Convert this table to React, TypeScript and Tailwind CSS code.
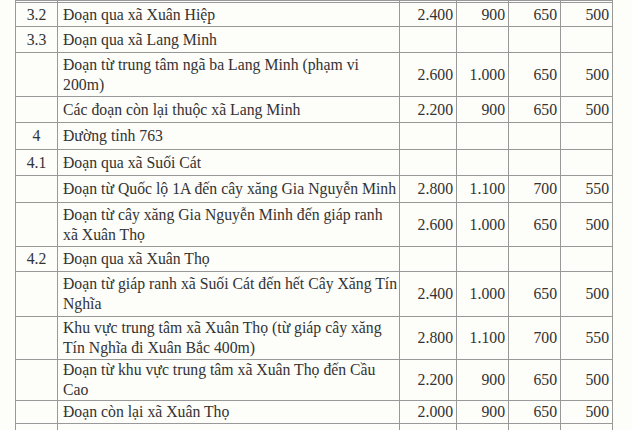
const rows = [
  { stt: "", name: [""], prices: ["", "", "", ""], h: "h-[2px]" },
  { stt: "3.2", name: ["Đoạn qua xã Xuân Hiệp"], prices: ["2.400", "900", "650", "500"], h: "h-[24px]" },
  { stt: "3.3", name: ["Đoạn qua xã Lang Minh"], prices: ["", "", "", ""], h: "h-[26px]" },
  {
    stt: "",
    name: ["Đoạn từ trung tâm ngã ba Lang Minh (phạm vi", "200m)"],
    prices: ["2.600", "1.000", "650", "500"],
    h: "h-[44px]",
  },
  { stt: "", name: ["Các đoạn còn lại thuộc xã Lang Minh"], prices: ["2.200", "900", "650", "500"], h: "h-[26px]" },
  { stt: "4", name: ["Đường tỉnh 763"], prices: ["", "", "", ""], h: "h-[27px]" },
  { stt: "4.1", name: ["Đoạn qua xã Suối Cát"], prices: ["", "", "", ""], h: "h-[26px]" },
  {
    stt: "",
    name: ["Đoạn từ Quốc lộ 1A đến cây xăng Gia Nguyễn Minh"],
    prices: ["2.800", "1.100", "700", "550"],
    h: "h-[27px]",
  },
  {
    stt: "",
    name: ["Đoạn từ cây xăng Gia Nguyễn Minh đến giáp ranh", "xã Xuân Thọ"],
    prices: ["2.600", "1.000", "650", "500"],
    h: "h-[44px]",
  },
  { stt: "4.2", name: ["Đoạn qua xã Xuân Thọ"], prices: ["", "", "", ""], h: "h-[25px]" },
  {
    stt: "",
    name: ["Đoạn từ giáp ranh xã Suối Cát đến hết Cây Xăng Tín", "Nghĩa"],
    prices: ["2.400", "1.000", "650", "500"],
    h: "h-[45px]",
  },
  {
    stt: "",
    name: ["Khu vực trung tâm xã Xuân Thọ (từ giáp cây xăng", "Tín Nghĩa đi Xuân Bắc 400m)"],
    prices: ["2.800", "1.100", "700", "550"],
    h: "h-[43px]",
  },
  {
    stt: "",
    name: ["Đoạn từ khu vực trung tâm xã Xuân Thọ đến Cầu", "Cao"],
    prices: ["2.200", "900", "650", "500"],
    h: "h-[41px]",
  },
  { stt: "", name: ["Đoạn còn lại xã Xuân Thọ"], prices: ["2.000", "900", "650", "500"], h: "h-[23px]" },
  { stt: "", name: [""], prices: ["", "", "", ""], h: "h-[24px]" },
]

export default function App() {
  return (
    <div className="w-[632px] h-[430px] overflow-hidden bg-[#fdfdfa] pl-[15px] text-[#333333] font-['Liberation_Serif',serif] text-[15.75px] leading-[20px]">
      <table className="border-collapse table-fixed w-[597px]">
        <colgroup>
          <col className="w-[42px]" />
          <col className="w-[342px]" />
          <col className="w-[57px]" />
          <col className="w-[52px]" />
          <col className="w-[52px]" />
          <col className="w-[52px]" />
        </colgroup>
        <tbody>
          {rows.map((r, idx) => (
            <tr key={idx} className={r.h}>
              <td className="border border-[#999999] p-0 text-center align-middle">{r.stt}</td>
              <td className="border border-[#999999] py-0 pl-[5px] pr-0 align-middle whitespace-nowrap">
                {r.name.map((line, i) => (
                  <div key={i}>{line}</div>
                ))}
              </td>
              {r.prices.map((p, i) => (
                <td key={i} className="border border-[#999999] py-0 pl-0 pr-[3px] text-right align-middle">
                  {p}
                </td>
              ))}
            </tr>
          ))}
        </tbody>
      </table>
    </div>
  )
}
